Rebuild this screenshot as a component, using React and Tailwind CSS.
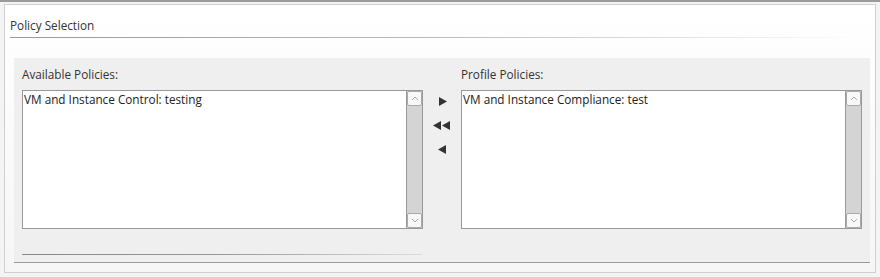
import { useState } from 'react';

function ScrollBox({ items }) {
  return (
    <div className="flex h-[139px] w-[401px] border border-[#999] bg-white">
      <div className="flex-1 px-px text-[11.75px] leading-[16px] text-[#222]">
        {items.map((item) => (
          <div key={item}>{item}</div>
        ))}
      </div>
      <div className="flex w-[16px] flex-col border-l border-[#999] bg-[#d4d4d4]">
        <div className="flex h-[15px] items-center justify-center rounded-[2px] border border-[#aaa] bg-[#f8f8f8]">
          <svg width="8" height="5" viewBox="0 0 8 5"><path d="M1 4 L4 1 L7 4" fill="none" stroke="#aaa" strokeWidth="1" /></svg>
        </div>
        <div className="flex-1" />
        <div className="flex h-[15px] items-center justify-center rounded-[2px] border border-[#aaa] bg-[#f8f8f8]">
          <svg width="8" height="5" viewBox="0 0 8 5"><path d="M1 1 L4 4 L7 1" fill="none" stroke="#aaa" strokeWidth="1" /></svg>
        </div>
      </div>
    </div>
  );
}

export default function App() {
  const [available] = useState(['VM and Instance Control: testing']);
  const [profile] = useState(['VM and Instance Compliance: test']);

  return (
    <div className="h-[277px] w-[880px] border-t-2 border-[#9a9a9a] bg-[#f4f4f4] px-[4px] pt-[2px] font-['Open_Sans',sans-serif]">
      <div className="h-[269px] border border-[#cfcfcf] bg-gradient-to-b from-white to-[#f6f6f6] px-[5px] pt-[12px]">
        <div className="text-[11.75px] leading-[16px] text-[#333]">Policy Selection</div>
        <div className="mt-[4px] h-px w-[850px] bg-gradient-to-r from-[#999] via-[#bbb] to-transparent" />
        <div className="ml-[4px] mt-[20px] h-[205px] w-[856px] border-b border-[#999] bg-[#efefef] px-[8px] pt-[8px]">
          <div className="flex">
            <div className="flex flex-col">
              <div className="h-[24px] text-[11.75px] leading-[16px] text-[#333]">Available Policies:</div>
              <ScrollBox items={available} />
            </div>
            <div className="flex w-[40px] flex-col items-center pt-[30px] text-[#333]">
              <svg width="10" height="11" viewBox="0 0 10 11" className="ml-[1px]"><path d="M1 1 L9 5.5 L1 10 Z" fill="#333" /></svg>
              <svg width="20" height="11" viewBox="0 0 20 11" className="mt-[13px]"><path d="M9 1 L1 5.5 L9 10 Z M18 1 L10 5.5 L18 10 Z" fill="#333" /></svg>
              <svg width="10" height="11" viewBox="0 0 10 11" className="mt-[13px]"><path d="M9 1 L1 5.5 L9 10 Z" fill="#333" /></svg>
            </div>
            <div className="flex flex-col">
              <div className="h-[24px] text-[11.75px] leading-[16px] text-[#333]">Profile Policies:</div>
              <ScrollBox items={profile} />
            </div>
          </div>
          <div className="mt-[25px] h-px w-[400px] bg-gradient-to-r from-[#888] via-[#999] to-[#ddd]" />
        </div>
      </div>
    </div>
  );
}
